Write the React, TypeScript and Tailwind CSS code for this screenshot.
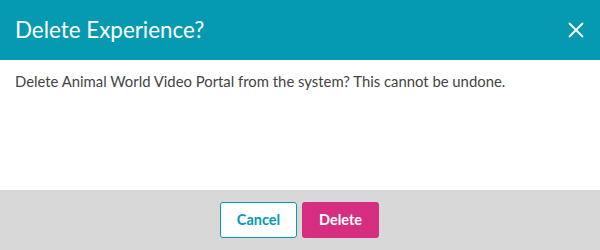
import React from "react";

export default function App() {
  return (
    <div className="w-[600px] h-[250px] flex flex-col bg-white" style={{ fontFamily: "Lato, 'Open Sans', sans-serif" }}>
      <div className="h-[60px] bg-[#059ab1] flex items-center justify-between pl-[15px] pr-[16px]">
        <h1 className="text-[22.4px] text-white font-normal leading-none">Delete Experience?</h1>
        <button className="text-white">
          <svg width="16" height="16" viewBox="0 0 16 16" fill="none" stroke="white" strokeWidth="1.8">
            <path d="M1 1 L15 15 M15 1 L1 15" />
          </svg>
        </button>
      </div>
      <div className="flex-1 px-[15px] pt-[11px]">
        <p className="text-[14.85px] text-[#444444] leading-[20px]">
          Delete Animal World Video Portal from the system? This cannot be undone.
        </p>
      </div>
      <div className="h-[60px] bg-[#d8d8d8] flex items-center justify-center gap-[5px] pr-[1px]">
        <button className="w-[77px] h-[36px] rounded-[3px] border border-[#059ab1] bg-white text-[#059ab1] text-[14.5px] font-bold">
          Cancel
        </button>
        <button className="w-[77px] h-[36px] rounded-[3px] bg-[#d52d80] text-white text-[14.5px] font-bold">
          Delete
        </button>
      </div>
    </div>
  );
}
